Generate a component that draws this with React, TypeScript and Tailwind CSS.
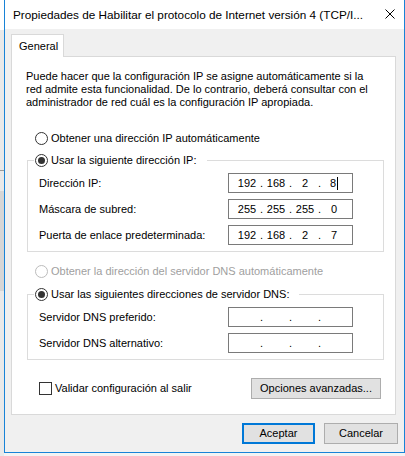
import React from "react";

const FONT = "font-['Liberation_Sans',Arial,sans-serif]";

function Radio({ checked, disabled }: { checked?: boolean; disabled?: boolean }) {
  return (
    <span
      className={`flex h-[13px] w-[13px] shrink-0 items-center justify-center rounded-full border bg-white ${
        disabled ? "border-[#bcbcbc]" : "border-[#333333]"
      }`}
    >
      {checked && <span className="h-[7px] w-[7px] rounded-full bg-[#333333]" />}
    </span>
  );
}

function IpBox({ octets, caret }: { octets?: string[]; caret?: boolean }) {
  const o = octets ?? ["", "", "", ""];
  return (
    <div className="flex h-[20px] w-[125px] items-center border border-[#7a7a7a] bg-white pl-[7px] text-[11px] leading-none text-black">
      <span className="w-[22px] text-center">{o[0]}</span>
      <span className="w-[7px] text-center">.</span>
      <span className="w-[22px] text-center">{o[1]}</span>
      <span className="w-[7px] text-center">.</span>
      <span className="w-[22px] text-center">{o[2]}</span>
      <span className="w-[7px] text-center">.</span>
      <span className="flex w-[22px] items-center justify-center">
        {o[3]}
        {caret && <span className="ml-px h-[13px] w-px bg-black" />}
      </span>
    </div>
  );
}

function Row({ label, octets, caret }: { label: string; octets?: string[]; caret?: boolean }) {
  return (
    <div className="flex items-center">
      <span className="w-[194px] pl-[5px]">{label}</span>
      <IpBox octets={octets} caret={caret} />
    </div>
  );
}

export default function App() {
  return (
    <div className={`flex h-[456px] w-[405px] overflow-hidden bg-[#f3f3f3] text-[11px] text-black ${FONT}`}>
      {/* what lies behind the dialog */}
      <div className="flex w-[4px] flex-col bg-[#e9e9e9]">
        <div className="h-[30px] bg-white" />
        <div className="mt-[140px] h-px bg-[#9a9a9a]" />
        <div className="mt-[20px] h-[100px] bg-[#d6d6d6]" />
      </div>

      <div className="flex h-[453px] w-[401px] flex-col border-x border-b border-[#1883d7] bg-[#f0f0f0]">
        {/* title bar */}
        <div className="flex h-[29px] items-center bg-white pl-[8px] pr-[9px]">
          <span className="whitespace-nowrap text-[11.75px]">
            Propiedades de Habilitar el protocolo de Internet versión 4 (TCP/I...
          </span>
          <svg className="ml-auto -mt-[1px] h-[10px] w-[10px]" viewBox="0 0 10 10">
            <path d="M0.5 0.5 L9.5 9.5 M9.5 0.5 L0.5 9.5" stroke="#000" strokeWidth="1" />
          </svg>
        </div>

        <div className="flex flex-col pl-[6px] pr-[8px] pt-[5px]">
          {/* tab */}
          <div className="relative z-10 -mb-px flex h-[23px] w-[53px] items-center border-x border-t border-[#d9d9d9] bg-white pl-[7px]">
            General
          </div>

          {/* panel */}
          <div className="flex h-[359px] flex-col border border-[#d9d9d9] bg-white pl-[14px] pr-[11px] pt-[13px]">
            <p className="whitespace-nowrap leading-[13px]">
              Puede hacer que la configuración IP se asigne automáticamente si la
              <br />
              red admite esta funcionalidad. De lo contrario, deberá consultar con el
              <br />
              administrador de red cuál es la configuración IP apropiada.
            </p>

            <div className="mt-[21px] flex h-[16px] items-center gap-[3px] pl-[9px]">
              <Radio />
              <span>Obtener una dirección IP automáticamente</span>
            </div>

            <fieldset className="ml-px mt-[6px] border border-[#dcdcdc] px-[6px] pb-[6px]">
              <legend className="flex h-[16px] items-center gap-[3px] pl-px pr-[10px]">
                <Radio checked />
                <span>Usar la siguiente dirección IP:</span>
              </legend>
              <div className="mt-[5px] flex flex-col gap-[6px]">
                <Row label="Dirección IP:" octets={["192", "168", "2", "8"]} caret />
                <Row label="Máscara de subred:" octets={["255", "255", "255", "0"]} />
                <Row label="Puerta de enlace predeterminada:" octets={["192", "168", "2", "7"]} />
              </div>
            </fieldset>

            <div className="mt-[11px] flex h-[16px] items-center gap-[3px] pl-[9px] text-[#a0a0a0]">
              <Radio disabled />
              <span>Obtener la dirección del servidor DNS automáticamente</span>
            </div>

            <fieldset className="ml-px mt-[7px] border border-[#dcdcdc] px-[6px] pb-[6px]">
              <legend className="flex h-[16px] items-center gap-[3px] pl-px pr-[10px]">
                <Radio checked />
                <span>Usar las siguientes direcciones de servidor DNS:</span>
              </legend>
              <div className="mt-[5px] flex flex-col gap-[6px]">
                <Row label="Servidor DNS preferido:" />
                <Row label="Servidor DNS alternativo:" />
              </div>
            </fieldset>

            <div className="mt-[18px] flex items-start pl-[13px] pr-[3px]">
              <div className="mt-[2px] flex items-center gap-[3px]">
                <span className="h-[13px] w-[13px] border border-[#333333] bg-white" />
                <span>Validar configuración al salir</span>
              </div>
              <button className="ml-auto h-[21px] w-[130px] border border-[#adadad] bg-[#e1e1e1]">
                Opciones avanzadas...
              </button>
            </div>
          </div>

          {/* footer */}
          <div className="mt-[8px] flex justify-end gap-[9px]">
            <button className="h-[21px] w-[73px] border-2 border-[#0078d7] bg-[#e1e1e1]">Aceptar</button>
            <button className="-mr-[2px] h-[21px] w-[74px] border border-[#adadad] bg-[#e1e1e1]">Cancelar</button>
          </div>
        </div>
      </div>
    </div>
  );
}
